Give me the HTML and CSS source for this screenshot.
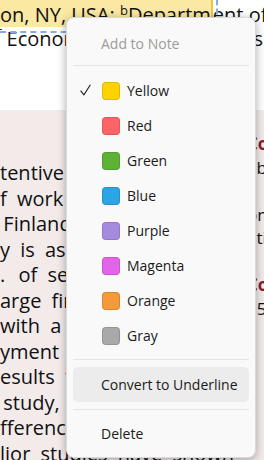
FILE: index.html
```html
<!DOCTYPE html>
<html lang="en">
<head>
    <meta charset="UTF-8">
    <meta name="viewport" content="width=device-width, initial-scale=1.0">
    <title>Highlight Menu</title>
    <link rel="stylesheet" href="styles.css">
</head>
<body>

    <div class="page">
        <div class="head">
            <div class="line1"><span class="hl">on, NY, USA: <sup>b</sup>Departm</span><span>ent of</span></div>
            <div class="line2"><span class="lead"><sup>f</sup> Economics</span> and Business</div>
            <div class="area-box"></div>
        </div>

        <div class="doc">
            <div class="col-left">
                <div>tentive to the needs of</div>
                <div>f work in the public sector</div>
                <div>&#8201;Finland, the Nordic model</div>
                <div>y is as follows. We study</div>
                <div>.&#8194;&#8201;of several large firms</div>
                <div>arge firms that merged</div>
                <div>with a change in the</div>
                <div>yment of workers in</div>
                <div>esults from the main</div>
                <div>&#8201;study, we find that</div>
                <div>fference between the</div>
                <div>lior studies have shown</div>
            </div>
            <div class="col-right">
                <div class="h">Conclusions</div>
                <div>able to show</div>
                <div>&nbsp;</div>
                <div>on the other</div>
                <div>ation of the</div>
                <div>&nbsp;</div>
                <div class="h">Contribution</div>
                <div>15 percent</div>
            </div>
        </div>

        <div class="menu">
            <div class="item title">Add to Note</div>
            <div class="sep sep-top"></div>

            <div class="item color">
                <span class="check">
                    <svg width="11" height="12" viewBox="0 0 11 12"><path d="M0.6 6.6 L3.9 10.9 L10.4 0.8" fill="none" stroke="#1b1b1b" stroke-width="1.1"/></svg>
                </span>
                <span class="swatch yellow"></span>Yellow
            </div>
            <div class="item color"><span class="check"></span><span class="swatch red"></span>Red</div>
            <div class="item color"><span class="check"></span><span class="swatch green"></span>Green</div>
            <div class="item color"><span class="check"></span><span class="swatch blue"></span>Blue</div>
            <div class="item color"><span class="check"></span><span class="swatch purple"></span>Purple</div>
            <div class="item color"><span class="check"></span><span class="swatch magenta"></span>Magenta</div>
            <div class="item color"><span class="check"></span><span class="swatch orange"></span>Orange</div>
            <div class="item color"><span class="check"></span><span class="swatch gray"></span>Gray</div>

            <div class="sep sep-mid"></div>
            <div class="item plain active">Convert to Underline</div>
            <div class="sep sep-low"></div>
            <div class="item plain">Delete</div>
        </div>
    </div>

</body>
</html>
```

FILE: styles.css
```css
body {
    margin: 0;
    font-family: "Open Sans", "Noto Sans", sans-serif;
    color: #111;
    background: #fff;
}
.page {
    position: relative;
    width: 264px;
    height: 460px;
    overflow: hidden;
}

/* document behind the menu */
.head {
    position: relative;
    height: 110px;
    background: #fff;
    font-size: 20px;
    white-space: nowrap;
}
.line1 {
    display: flex;
    height: 27px;
}
.line1 span {
    padding-top: 2px;
    line-height: 25px;
}
.line1 .hl {
    background: #fbe8a2;
    border-right: 2px solid #f2c53f;
}
.line2 {
    line-height: 24px;
    width: 263px;
    text-align: justify;
    text-align-last: justify;
}
.line2 .lead {
    display: inline-block;
}
.head sup {
    font-size: 13px;
    line-height: 0;
    vertical-align: 7px;
}
.line2 sup {
    margin-left: -3px;
}
.area-box {
    position: absolute;
    left: -10px;
    top: -10px;
    width: 228px;
    height: 43px;
    box-sizing: border-box;
    border-right: 2px dashed #86abea;
    border-bottom: 2px dashed #86abea;
}

.doc {
    display: grid;
    grid-template-columns: 247px 1fr;
    height: 350px;
    background: #f3eaea;
    white-space: nowrap;
}
.col-left {
    overflow: hidden;
    padding-top: 50px;
    font-size: 20px;
    line-height: 25.5px;
    word-spacing: 5px;
}
.col-right {
    padding-top: 22px;
    font-size: 17px;
    line-height: 23.5px;
}
.col-right .h {
    font-weight: bold;
    color: #8a1c2b;
}

/* highlight menu */
.menu {
    position: absolute;
    left: 66px;
    top: 17px;
    width: 190px;
    height: 441px;
    box-sizing: border-box;
    padding: 4px 6px 6px;
    background: #f9f9f9;
    border: 1px solid #dadada;
    border-radius: 8px;
    box-shadow: 0 2px 10px rgba(0, 0, 0, 0.32);
    font-size: 14px;
    color: #1b1b1b;
}
.item {
    display: flex;
    align-items: center;
    height: 35px;
    padding-left: 7px;
    border-radius: 5px;
    white-space: nowrap;
}
.item.title {
    height: 42px;
    padding-left: 28px;
    color: #9b9b9b;
}
.item.plain {
    padding-left: 28px;
}
.item.active {
    background: #ececec;
}
.sep {
    height: 1px;
    background: #e4e4e4;
}
.sep-top { margin: 1px 0 7px; }
.sep-mid { margin: 6px 0 7px; }
.sep-low { margin: 7px 0 6px; }

.check {
    display: flex;
    width: 22px;
    margin-top: -1px;
}
.swatch {
    width: 18px;
    height: 18px;
    box-sizing: border-box;
    margin-right: 7px;
    border-radius: 4px;
    border: 1px solid rgba(0, 0, 0, 0.12);
}
.yellow { background: #ffd300; }
.red { background: #fd6466; }
.green { background: #5fb236; }
.blue { background: #2ba5e5; }
.purple { background: #a48be0; }
.magenta { background: #e264e8; }
.orange { background: #f49a3a; }
.gray { background: #a9a9a9; }
```
